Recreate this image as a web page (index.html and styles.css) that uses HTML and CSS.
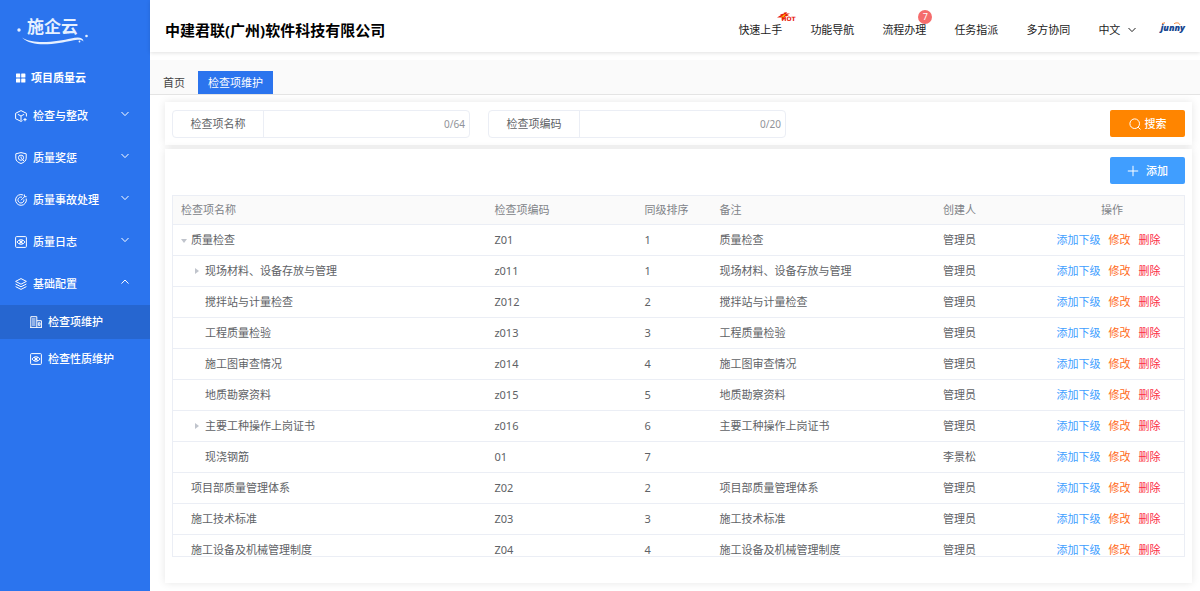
FILE: index.html
```html
<!DOCTYPE html>
<html lang="zh-CN">
<head>
<meta charset="utf-8">
<title>检查项维护</title>
<link rel="stylesheet" href="styles.css">
</head>
<body>
<svg class="sprite" aria-hidden="true">
  <symbol id="down" viewBox="0 0 8 8"><path d="M.5 2 4 5.600 7.500 2"/></symbol>
  <symbol id="up" viewBox="0 0 8 8"><path d="M.5 5.600 4 2l3.500 3.600"/></symbol>
  <symbol id="eye" viewBox="0 0 12 12"><rect x=".6" y=".6" width="10.800" height="10.800" rx="1"/><path d="M2 6c2-3 6-3 8 0-2 3-6 3-8 0zM4 4.200l4 3.600M8 4.200 4 7.800"/><circle cx="6" cy="6" r="1"/></symbol>
</svg>
<div class="app">
  <aside class="sidebar">
    <div class="brand">
      <span class="brand-name">施企云</span>
      <svg class="brand-swoosh" viewBox="0 0 72 30" aria-hidden="true"><circle cx="2" cy="14" r="1.700"/><circle cx="69.500" cy="20" r="1.300"/><circle cx="62.500" cy="25.500" r=".9"/><path d="M5 21.500c13 8 37 3.500 49 1 7-1.500 12-1.500 12.500 3-2-2.600-6-1.800-12-.8C43 27 16 33 5 21.500z"/></svg>
    </div>
    <h2 class="module"><svg class="icon solid" viewBox="0 0 12 12" aria-hidden="true"><rect x="1" y="1.500" width="4.200" height="4" rx=".5"/><rect x="6.200" y="1.500" width="4.200" height="4" rx=".5"/><rect x="1" y="6.500" width="4.200" height="4" rx=".5"/><rect x="6.200" y="6.500" width="4.200" height="4" rx=".5"/></svg>项目质量云</h2>
    <nav class="menu">
      <button class="menu-item"><svg class="icon" viewBox="0 0 12 12" aria-hidden="true"><path d="M11.400 6.500V3.300L6 .6.600 3.300v5.400L6 11.400l1.500-.8M2.800 4.300 6 6l3.200-1.700M6 6v4.500M10 8v3.200M8.400 9.600h3.200"/></svg><span>检查与整改</span><svg class="arrow"><use href="#down"/></svg></button>
      <button class="menu-item"><svg class="icon" viewBox="0 0 12 12" aria-hidden="true"><path d="M6 .6 11.200 1.800v4.400c0 2.600-2.200 4.300-5.200 5.300-3-1-5.200-2.700-5.200-5.300V1.800z"/><circle cx="6" cy="5.700" r="2.600"/><path d="M6 4.500v1.400l1 .7M7.500 7.500 9 9"/></svg><span>质量奖惩</span><svg class="arrow"><use href="#down"/></svg></button>
      <button class="menu-item"><svg class="icon" viewBox="0 0 12 12" aria-hidden="true"><path d="M8.200 1A5.400 5.400 0 1 0 11.200 4.500M7 3.200A3 3 0 1 0 8.900 5.500M6 6.200l3.700-3.700M9.400.5v2.200h2.200"/></svg><span>质量事故处理</span><svg class="arrow"><use href="#down"/></svg></button>
      <button class="menu-item"><svg class="icon" aria-hidden="true"><use href="#eye"/></svg><span>质量日志</span><svg class="arrow"><use href="#down"/></svg></button>
      <button class="menu-item" aria-expanded="true"><svg class="icon" viewBox="0 0 12 12" aria-hidden="true"><path d="M6 .6 11.400 3.400 6 6.200.600 3.400zM.6 6 6 8.800 11.400 6M.6 8.600 6 11.400l5.400-2.800"/></svg><span>基础配置</span><svg class="arrow"><use href="#up"/></svg></button>
      <div class="submenu">
        <a class="sub-item active" href="#"><svg class="icon" viewBox="0 0 12 12" aria-hidden="true"><path d="M.8 11.300V.7h6v10.600M6.800 4.700h4.600v6.600M0 11.400h12M2 3h3.500M2 5h3.500M2 7h3.500M2 9h3.500M8.300 6.800h1.700v2.500H8.300z"/></svg>检查项维护</a>
        <a class="sub-item" href="#"><svg class="icon" aria-hidden="true"><use href="#eye"/></svg>检查性质维护</a>
      </div>
    </nav>
  </aside>
  <div class="page">
    <header class="topbar">
      <h1 class="company">中建君联(广州)软件科技有限公司</h1>
      <nav class="topnav">
        <a href="#">快速上手<span class="hot"><svg viewBox="0 0 14 8" aria-hidden="true"><path fill="#e8200c" d="M0 5.500 4 3 3 2.600 7 1.500 6.700.8 10 0 9 1.600 13 1.400 10 3 12 3.800 8 4.400 7 7.500 4.500 7.500 5 5.500z"/><path fill="#ffb400" d="M4 5 7 2.600 9 2 7.500 4 6 6z"/></svg><b>HOT</b></span></a>
        <a href="#">功能导航</a>
        <a href="#">流程办理<span class="badge">7</span></a>
        <a href="#">任务指派</a>
        <a href="#">多方协同</a>
        <button class="lang">中文<svg class="arrow"><use href="#down"/></svg></button>
      </nav>
      <a class="vendor" href="#">junny<svg viewBox="0 0 24 10" aria-hidden="true"><path d="M2 1.500 5 .8M14 1.800c2-1.400 5-1.400 6 1"/></svg></a>
    </header>
    <nav class="tabs">
      <a class="tab" href="#">首页</a>
      <a class="tab current" href="#">检查项维护</a>
    </nav>
    <main class="content">
      <form class="card search">
        <div class="field"><label for="name">检查项名称</label><input id="name" type="text" maxlength="64"><span class="count">0/64</span></div>
        <div class="field"><label for="code">检查项编码</label><input id="code" type="text" maxlength="20"><span class="count">0/20</span></div>
        <button class="btn btn-search" type="button"><svg viewBox="0 0 12 12" aria-hidden="true"><circle cx="5.700" cy="5.700" r="4.800"/><path d="m9.200 9.200 2.300 2.300"/></svg>搜索</button>
      </form>
      <section class="card list">
        <div class="toolbar"><button class="btn btn-add"><svg viewBox="0 0 12 12" aria-hidden="true"><path d="M6 .8v10.400M.8 6h10.400"/></svg>添加</button></div>
        <div class="table-wrap">
          <table>
            <thead><tr><th class="c-name">检查项名称</th><th class="c-code">检查项编码</th><th class="c-order">同级排序</th><th>备注</th><th class="c-user">创建人</th><th class="c-ops">操作</th></tr></thead>
            <tbody>
              <tr><td><span class="node open">质量检查</span></td><td>Z01</td><td>1</td><td>质量检查</td><td>管理员</td><td class="ops"><a class="add" href="#">添加下级</a><a class="edit" href="#">修改</a><a class="del" href="#">删除</a></td></tr>
              <tr><td><span class="node child closed">现场材料、设备存放与管理</span></td><td>z011</td><td>1</td><td>现场材料、设备存放与管理</td><td>管理员</td><td class="ops"><a class="add" href="#">添加下级</a><a class="edit" href="#">修改</a><a class="del" href="#">删除</a></td></tr>
              <tr><td><span class="node child">搅拌站与计量检查</span></td><td>Z012</td><td>2</td><td>搅拌站与计量检查</td><td>管理员</td><td class="ops"><a class="add" href="#">添加下级</a><a class="edit" href="#">修改</a><a class="del" href="#">删除</a></td></tr>
              <tr><td><span class="node child">工程质量检验</span></td><td>z013</td><td>3</td><td>工程质量检验</td><td>管理员</td><td class="ops"><a class="add" href="#">添加下级</a><a class="edit" href="#">修改</a><a class="del" href="#">删除</a></td></tr>
              <tr><td><span class="node child">施工图审查情况</span></td><td>z014</td><td>4</td><td>施工图审查情况</td><td>管理员</td><td class="ops"><a class="add" href="#">添加下级</a><a class="edit" href="#">修改</a><a class="del" href="#">删除</a></td></tr>
              <tr><td><span class="node child">地质勘察资料</span></td><td>z015</td><td>5</td><td>地质勘察资料</td><td>管理员</td><td class="ops"><a class="add" href="#">添加下级</a><a class="edit" href="#">修改</a><a class="del" href="#">删除</a></td></tr>
              <tr><td><span class="node child closed">主要工种操作上岗证书</span></td><td>z016</td><td>6</td><td>主要工种操作上岗证书</td><td>管理员</td><td class="ops"><a class="add" href="#">添加下级</a><a class="edit" href="#">修改</a><a class="del" href="#">删除</a></td></tr>
              <tr><td><span class="node child">现浇钢筋</span></td><td>01</td><td>7</td><td></td><td>李景松</td><td class="ops"><a class="add" href="#">添加下级</a><a class="edit" href="#">修改</a><a class="del" href="#">删除</a></td></tr>
              <tr><td><span class="node">项目部质量管理体系</span></td><td>Z02</td><td>2</td><td>项目部质量管理体系</td><td>管理员</td><td class="ops"><a class="add" href="#">添加下级</a><a class="edit" href="#">修改</a><a class="del" href="#">删除</a></td></tr>
              <tr><td><span class="node">施工技术标准</span></td><td>Z03</td><td>3</td><td>施工技术标准</td><td>管理员</td><td class="ops"><a class="add" href="#">添加下级</a><a class="edit" href="#">修改</a><a class="del" href="#">删除</a></td></tr>
              <tr><td><span class="node">施工设备及机械管理制度</span></td><td>Z04</td><td>4</td><td>施工设备及机械管理制度</td><td>管理员</td><td class="ops"><a class="add" href="#">添加下级</a><a class="edit" href="#">修改</a><a class="del" href="#">删除</a></td></tr>
            </tbody>
          </table>
        </div>
      </section>
    </main>
  </div>
</div>
</body>
</html>
```
FILE: styles.css
```css
* { box-sizing: border-box; }
body {
  margin: 0;
  font: 11px/16px "Noto Sans", "Noto Sans CJK SC", sans-serif;
  color: #606266;
  background: #fff;
}
a { color: inherit; text-decoration: none; }
button { border: 0; padding: 0; background: none; color: inherit; font: inherit; cursor: pointer; }
svg { fill: none; stroke: currentColor; flex: none; }
.sprite { display: none; }
.app { display: flex; height: 100vh; overflow: hidden; }

/* Sidebar */
.sidebar { flex: none; width: 150px; background: #2b74ee; color: #fff; }
.brand { position: relative; height: 60px; padding: 15px 0 0 27px; }
.brand-name { font-size: 17px; line-height: 24px; font-weight: 700; color: #e6f0ff; }
.brand-swoosh { position: absolute; left: 17px; top: 16px; width: 72px; height: 30px; fill: #e6f0ff; stroke: none; }
.icon { width: 12px; height: 12px; overflow: visible; }
.solid { fill: #fff; stroke: none; }
.arrow { width: 8px; height: 8px; }
.module { display: flex; align-items: center; gap: 4px; height: 35px; margin: 0; padding-left: 15px; font-size: 11px; font-weight: 700; }
.menu-item { display: flex; align-items: center; gap: 6px; width: 100%; height: 42px; padding: 0 21px 0 15px; font-weight: 500; text-align: left; }
.menu-item .arrow { margin: 0 0 4px auto; }
.submenu { display: flex; flex-direction: column; gap: 3px; }
.sub-item { display: flex; align-items: center; gap: 6px; height: 34px; padding-left: 30px; font-weight: 500; }
.sub-item.active { background: #2666d0; }

/* Top bar */
.page { flex: 1; min-width: 0; display: flex; flex-direction: column; }
.topbar { position: relative; flex: none; display: flex; align-items: center; height: 52px; padding: 8px 15px 0; box-shadow: 0 1px 4px rgba(0, 0, 0, .12); color: #222; }
.company { margin: 0 auto 0 0; font-size: 15px; line-height: 24px; color: #000; }
.topnav { display: flex; gap: 28px; }
.topnav a { position: relative; }
.lang { display: flex; align-items: center; gap: 8px; }
.hot { position: absolute; left: 39px; top: -10px; width: 20px; height: 13px; }
.hot svg { position: absolute; left: 0; top: 0; width: 14px; height: 8px; stroke: none; }
.hot b { position: absolute; left: 4px; top: 3px; font: 900 6px/8px "DejaVu Sans", sans-serif; color: #e8200c; }
.badge { position: absolute; right: -6px; top: -12px; width: 14px; height: 14px; border-radius: 50%; background: #f56c6c; color: #fff; font-size: 9px; line-height: 14px; text-align: center; }
.vendor { position: relative; margin: 0 0 4px 24px; font: italic 900 9px/12px "Noto Sans", sans-serif; color: #16458f; }
.vendor svg { position: absolute; left: 0; top: 0; width: 24px; height: 10px; stroke: #f08030; }

/* Tabs */
.tabs { flex: none; display: flex; align-items: flex-end; gap: 3px; height: 35px; margin-top: 8px; padding-left: 3px; background: #fafafa; border-bottom: 1px solid #e4e4e4; }
.tab { height: 23px; padding: 0 10px; line-height: 23px; color: #444; }
.tab.current { background: #2b74ee; color: #fff; }

/* Cards */
.content { flex: 1; min-height: 0; display: flex; flex-direction: column; gap: 4px; padding: 7px 8px 8px 15px; }
.card { background: #fff; box-shadow: 0 0 8px rgba(0, 0, 0, .1); }
.search { flex: none; display: flex; align-items: center; gap: 18px; height: 43px; padding: 0 7px; }
.field { display: flex; align-items: center; width: 298px; height: 28px; border: 1px solid #ebeef5; border-radius: 4px; }
.field label { width: 91px; line-height: 26px; border-right: 1px solid #ebeef5; text-align: center; }
.field input { flex: 1; min-width: 0; height: 26px; border: 0; outline: 0; background: none; font: inherit; }
.count { padding: 0 4px; font-size: 10px; color: #909399; }
.btn { display: flex; align-items: center; justify-content: center; width: 75px; height: 27px; border-radius: 2px; color: #fff; font-weight: 500; }
.btn svg { width: 12px; height: 12px; }
.btn-search { gap: 4px; margin-left: auto; background: #ff8500; }
.btn-add { gap: 7px; background: #409eff; }
.list { flex: 1; min-height: 0; display: flex; flex-direction: column; padding: 8px 7px 26px; }
.toolbar { flex: none; display: flex; justify-content: flex-end; height: 38px; }

/* Table */
.table-wrap { flex: 1; min-height: 0; overflow: hidden; border: 1px solid #ebeef5; }
table { width: 100%; table-layout: fixed; border-collapse: separate; border-spacing: 0; line-height: 12px; }
th, td { height: 31px; padding: 0 8px; border-bottom: 1px solid #ebeef5; text-align: left; white-space: nowrap; }
th { height: 29px; background: #fafafa; color: #808388; font-weight: 400; }
.c-name { width: 31%; }
.c-code { width: 150px; }
.c-order { width: 75px; }
.c-user { width: 105px; }
.c-ops { width: 144px; text-align: center; }
.node { position: relative; display: block; padding-left: 10px; }
.node.child { padding-left: 24px; }
.node.open::before, .node.closed::before { content: ""; position: absolute; border: 3px solid transparent; }
.node.open::before { left: 0; top: 5px; border-top: 4px solid #c0c4cc; }
.node.closed::before { left: 14px; top: 3px; border-left: 4px solid #c0c4cc; }
.ops { padding: 0 7px 0 0; text-align: center; }
.ops a + a { margin-left: 8px; }
.add { color: #409eff; }
.edit { color: #ff6a1a; }
.del { color: #fb2c45; }
```
